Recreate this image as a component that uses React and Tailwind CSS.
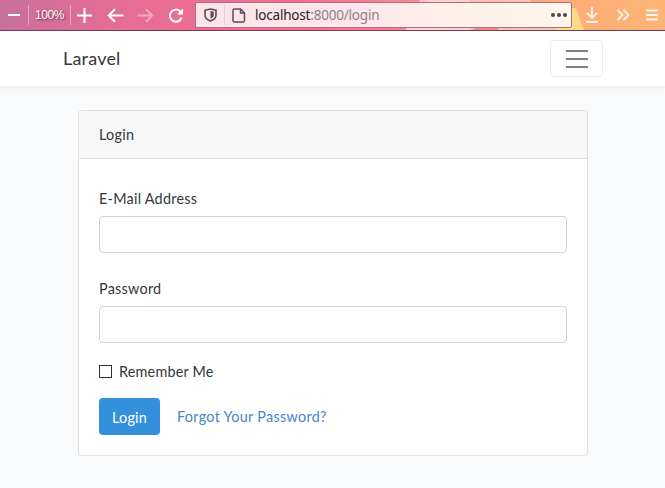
const font = { fontFamily: '"Lato", "Noto Sans", sans-serif' };

function Toolbar() {
  return (
    <div className="relative h-[31px] overflow-hidden border-b border-[#7a3a55] bg-[linear-gradient(90deg,#c8709c_0%,#e56d95_18%,#f76e90_45%,#fb8a8f_65%,#fdae77_85%,#fdb475_100%)]">
      <svg className="absolute inset-0" width="665" height="31" viewBox="0 0 665 31">
        <polygon points="405,31 430,0 530,0 560,31" fill="#fdc8b8" opacity="0.8" />
        <polygon points="405,31 420,0 470,0 470,31" fill="#ffd8e0" opacity="0.7" />
        <polygon points="470,31 490,20 500,31" fill="#f78a80" />
        <polygon points="566,8 576,8 584,31 555,31" fill="#fde08e" opacity="0.85" />
      </svg>
      <div className="relative flex h-[30px] items-center text-white">
        <svg className="ml-[8px]" width="12" height="14" viewBox="0 0 12 14"><path d="M0 7h12" stroke="#fff" strokeWidth="2" /></svg>
        <div className="ml-[8px] h-[20px] w-px bg-white/40" />
        <div className="w-[41px] text-center font-['Liberation_Sans',sans-serif] text-[12px] tracking-[-0.4px] text-white [text-shadow:1px_1px_2px_rgba(90,20,50,0.8)]">100%</div>
        <div className="h-[20px] w-px bg-white/40" />
        <svg className="ml-[6px]" width="15" height="15" viewBox="0 0 15 15"><path d="M0 7.5h15M7.5 0v15" stroke="#fff" strokeWidth="2" /></svg>
        <svg className="ml-[15px]" width="17" height="15" viewBox="0 0 17 15" fill="none"><path d="M16.5 7.5H2M8 1.2 1.7 7.5 8 13.8" stroke="#fff" strokeWidth="2" /></svg>
        <svg className="ml-[13px]" width="17" height="15" viewBox="0 0 17 15" fill="none"><path d="M0.5 7.5H15M9 1.2l6.3 6.3L9 13.8" stroke="#fff" strokeOpacity="0.4" strokeWidth="2" /></svg>
        <svg className="ml-[14px]" width="16" height="15" viewBox="0 0 16 15" fill="none"><path d="M13.6 9.6A6 6 0 1 1 12.2 3.4L14 5" stroke="#fff" strokeWidth="2" /><path d="M15 0.5V6.5H9Z" fill="#fff" /></svg>
        <div className="ml-[11px] flex h-[26px] w-[377px] items-center rounded-[2px] border border-[#a8707f] bg-[linear-gradient(90deg,#fde4ec_0%,#fde6ec_40%,#fff0ea_70%,#fff6ea_100%)]">
          <svg className="ml-[8px]" width="13" height="14" viewBox="0 0 13 14" fill="none"><path d="M1 2.2 6.5 1 12 2.2V7c0 3-2.5 5-5.5 6C3.500 12 1 10 1 7Z" stroke="#5d4a52" strokeWidth="1.6" /><path d="M6.500 3 9.800 3.800V7c0 1.800-1.500 3-3.300 3.800Z" fill="#5d4a52" /></svg>
          <div className="ml-[7px] h-[20px] w-px bg-[#e9ccd4]" />
          <svg className="ml-[7px]" width="14" height="15" viewBox="0 0 14 15" fill="none"><path d="M2.500 1h6l4 4v7.500a1.500 1.500 0 0 1-1.500 1.500H2.500A1.500 1.500 0 0 1 1 12.500v-10A1.500 1.500 0 0 1 2.500 1Z" stroke="#5d4a52" strokeWidth="1.500" /><path d="M8.500 1v4h4" stroke="#5d4a52" strokeWidth="1.500" /></svg>
          <div className="ml-[9px] font-['Noto_Sans',sans-serif] text-[13.500px] tracking-[-0.2px] text-[#2a2226]">localhost<span className="text-[#8f7f84]">:8000/login</span></div>
          <div className="ml-auto mr-[4px] flex gap-[2px]">
            <div className="h-[4px] w-[4px] rounded-full bg-[#4f4a48]" />
            <div className="h-[4px] w-[4px] rounded-full bg-[#4f4a48]" />
            <div className="h-[4px] w-[4px] rounded-full bg-[#4f4a48]" />
          </div>
        </div>
        <svg className="ml-[13px]" width="14" height="16" viewBox="0 0 14 16" fill="none"><path d="M7 0v11M2 6l5 5 5-5" stroke="#fff" strokeOpacity="0.85" strokeWidth="1.800" /><path d="M1 15h12" stroke="#fff" strokeOpacity="0.85" strokeWidth="2" /></svg>
        <svg className="ml-[17px]" width="14" height="12" viewBox="0 0 14 12" fill="none"><path d="M1.500 1l5 5-5 5M7.500 1l5 5-5 5" stroke="#fff" strokeOpacity="0.85" strokeWidth="2" /></svg>
        <svg className="ml-[16px]" width="12" height="12" viewBox="0 0 12 12" fill="none"><path d="M0 1.500h12M0 6h12M0 10.500h12" stroke="#fff" strokeOpacity="0.85" strokeWidth="2" /></svg>
      </div>
    </div>
  );
}

function Navbar() {
  return (
    <div className="flex h-[55px] items-center justify-between bg-white pl-[63px] pr-[62px] shadow-[0_2px_4px_rgba(0,0,0,0.04)]">
      <span className="text-[18px] tracking-[0.2px] text-[#33383c]">Laravel</span>
      <button className="flex h-[37px] w-[53px] flex-col items-center justify-center gap-[6px] rounded-[4px] border border-[#ececec]">
        <span className="h-[2px] w-[22px] bg-[#808080]" />
        <span className="h-[2px] w-[22px] bg-[#808080]" />
        <span className="h-[2px] w-[22px] bg-[#808080]" />
      </button>
    </div>
  );
}

function Field({ label, className }) {
  return (
    <div className={className}>
      <label className="block h-[22px] pt-px text-[14.400px] leading-[22px] tracking-[0.25px] text-[#33383c]">{label}</label>
      <input className="mt-[7px] block h-[37px] w-full rounded-[4px] border border-[#ced4da] bg-white" />
    </div>
  );
}

export default function App() {
  return (
    <div style={font} className="h-[488px] w-[665px] overflow-hidden bg-[#f8fafc]">
      <Toolbar />
      <Navbar />
      <div className="ml-[78px] mt-[24px] w-[510px] rounded-[4px] border border-[#dfdfdf] bg-white">
        <div className="flex h-[48px] items-center rounded-t-[4px] border-b border-[#dfdfdf] bg-[#f7f7f7] px-[20px] pt-px text-[14.400px] tracking-[0.25px] text-[#33383c]">Login</div>
        <div className="px-[20px] pb-[20px] pt-[28px]">
          <Field label="E-Mail Address" />
          <Field label="Password" className="mt-[24px]" />
          <div className="mt-[21px] flex h-[14px] items-center">
            <span className="h-[13px] w-[13px] border border-[#333] bg-white" />
            <span className="ml-[7px] pt-px text-[14.400px] tracking-[0.2px] text-[#33383c]">Remember Me</span>
          </div>
          <div className="mt-[20px] flex items-center">
            <button className="h-[37px] w-[61px] rounded-[4px] bg-[#3490dc] pt-[2px] text-[14.400px] tracking-[0.25px] text-white">Login</button>
            <a className="ml-[17px] pt-[1px] text-[14.400px] tracking-[0.3px] text-[#4a86c8]">Forgot Your Password?</a>
          </div>
        </div>
      </div>
    </div>
  );
}
